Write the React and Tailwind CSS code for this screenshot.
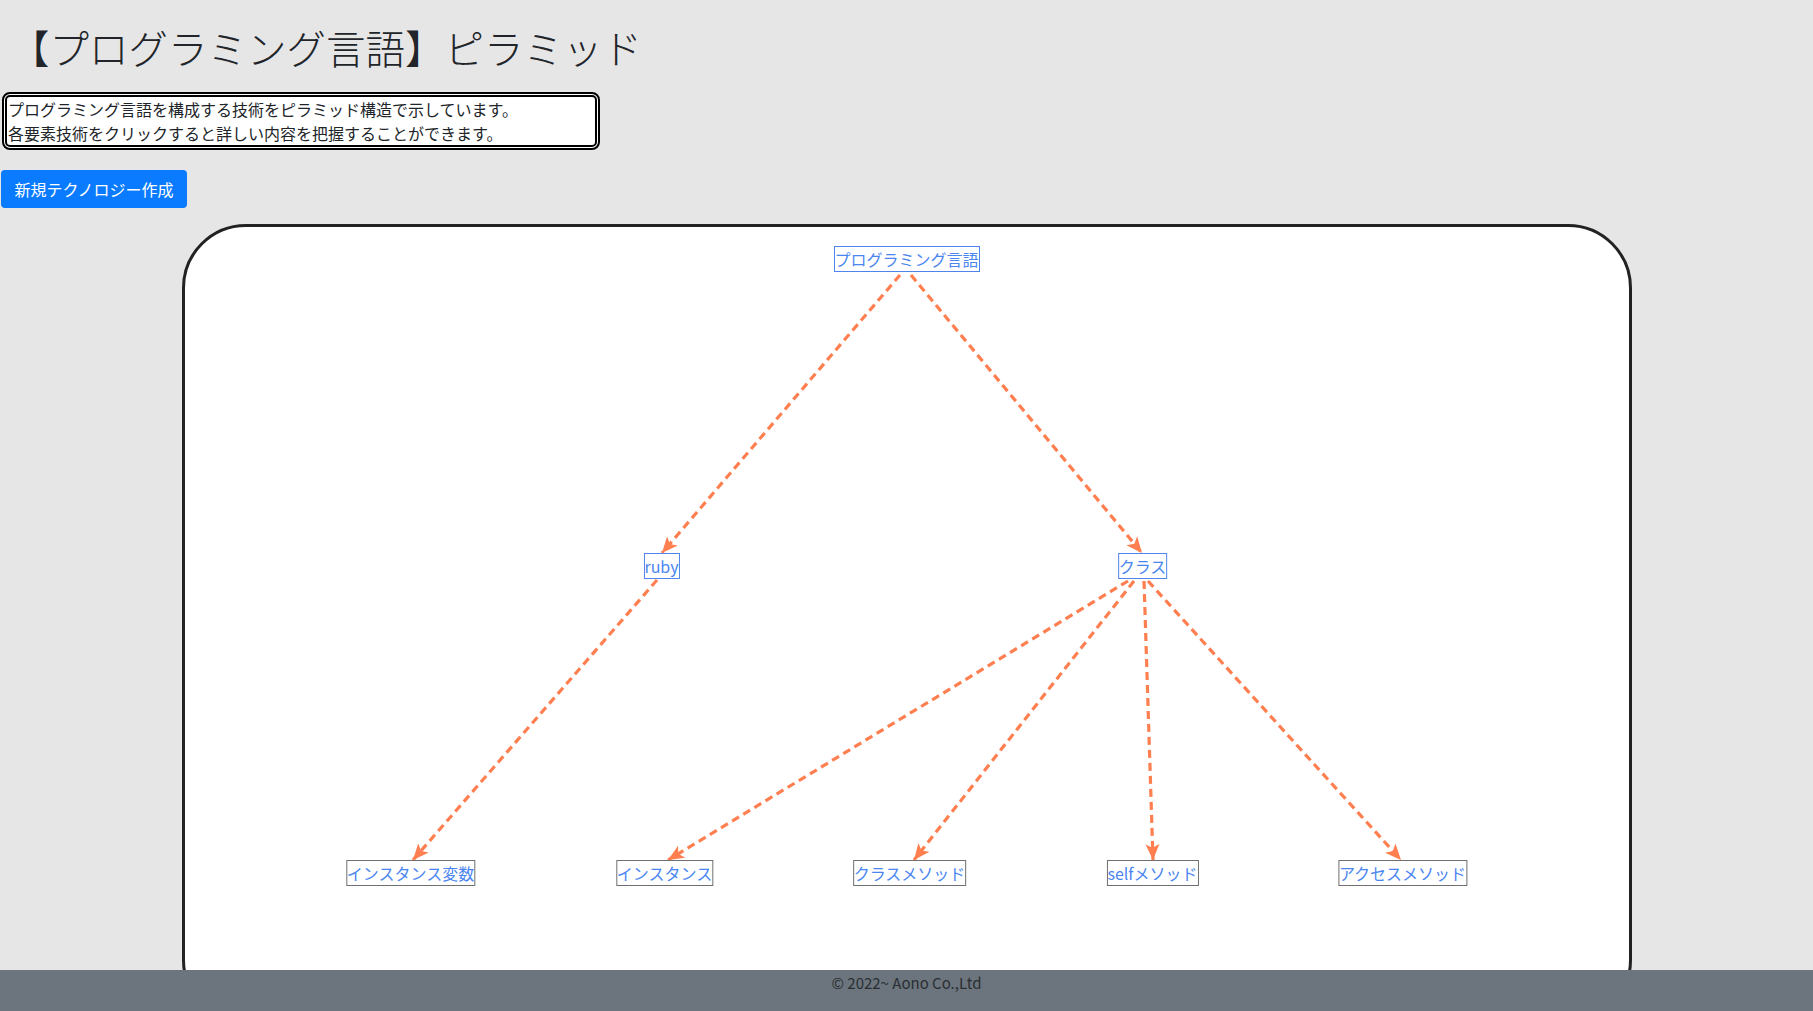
import React from "react";

const font = { fontFamily: '"Noto Sans CJK JP", "Noto Sans", sans-serif' };

// node centres are relative to the card's inner box
const nodes = [
  { id: "root", label: "プログラミング言語", x: 722, y: 19, blue: true },
  { id: "ruby", label: "ruby", x: 477, y: 326, blue: true },
  { id: "class", label: "クラス", x: 958, y: 326, blue: true },
  { id: "ivar", label: "インスタンス変数", x: 226, y: 633 },
  { id: "inst", label: "インスタンス", x: 480, y: 633 },
  { id: "cmethod", label: "クラスメソッド", x: 725, y: 633 },
  { id: "self", label: "selfメソッド", x: 968, y: 633 },
  { id: "access", label: "アクセスメソッド", x: 1218, y: 633 },
];

const edges = [
  [715, 48, 477, 326],
  [726, 48, 957, 326],
  [472, 353, 228, 633],
  [943, 354, 483, 633],
  [949, 354, 729, 633],
  [959, 354, 968, 633],
  [963, 354, 1216, 633],
];

function Graph() {
  return (
    <>
      <svg className="absolute inset-0 w-full h-full pointer-events-none">
        <defs>
          <marker
            id="arrow"
            markerUnits="userSpaceOnUse"
            markerWidth="18"
            markerHeight="16"
            refX="16"
            refY="8"
            orient="auto"
          >
            <path d="M0,1 L16,8 L0,15 L4,8 Z" fill="#ff7f50" />
          </marker>
        </defs>
        {edges.map(([x1, y1, x2, y2], i) => (
          <line
            key={i}
            x1={x1}
            y1={y1}
            x2={x2}
            y2={y2}
            stroke="#ff7f50"
            strokeWidth="3.2"
            strokeDasharray="8 5"
            markerEnd="url(#arrow)"
          />
        ))}
      </svg>
      {nodes.map((n) => (
        <div
          key={n.id}
          className={
            n.blue
              ? "absolute -translate-x-1/2 bg-white border border-[#4f84ec] text-[#4a86f0] text-base leading-6 whitespace-nowrap cursor-pointer"
              : "absolute -translate-x-1/2 bg-white border border-[#6f6f6f] text-[#4a86f0] text-base leading-6 whitespace-nowrap cursor-pointer"
          }
          style={{ left: n.x, top: n.y }}
        >
          {n.label}
        </div>
      ))}
    </>
  );
}

export default function App() {
  return (
    <div className="h-[1011px] overflow-hidden bg-[#e7e6e7] text-[#212529]" style={font}>
      <div className="pl-px">
        <h1 className="pt-[23px] pl-[9px] text-[39.5px] leading-[48px] font-light mb-[21px]">
          【プログラミング言語】ピラミッド
        </h1>

        <div className="w-[598px] ml-px bg-white border-[5px] border-double border-black rounded-lg text-base leading-6 pl-px">
          <div>プログラミング言語を構成する技術をピラミッド構造で示しています。</div>
          <div>各要素技術をクリックすると詳しい内容を把握することができます。</div>
        </div>

        <button className="mt-5 h-[38px] w-[186px] bg-[#0a7bff] text-white text-base rounded">
          新規テクノロジー作成
        </button>
      </div>

      <div className="relative mt-4 mx-auto w-[1450px] h-[800px] bg-white border-[3px] border-[#222222] rounded-[64px]">
        <Graph />
      </div>

      <footer className="fixed bottom-0 left-0 right-0 h-[41px] bg-[#6c757d] text-center text-[15px] leading-6 text-[#2a2e33] pt-px">
        © 2022~ Aono Co.,Ltd
      </footer>
    </div>
  );
}
